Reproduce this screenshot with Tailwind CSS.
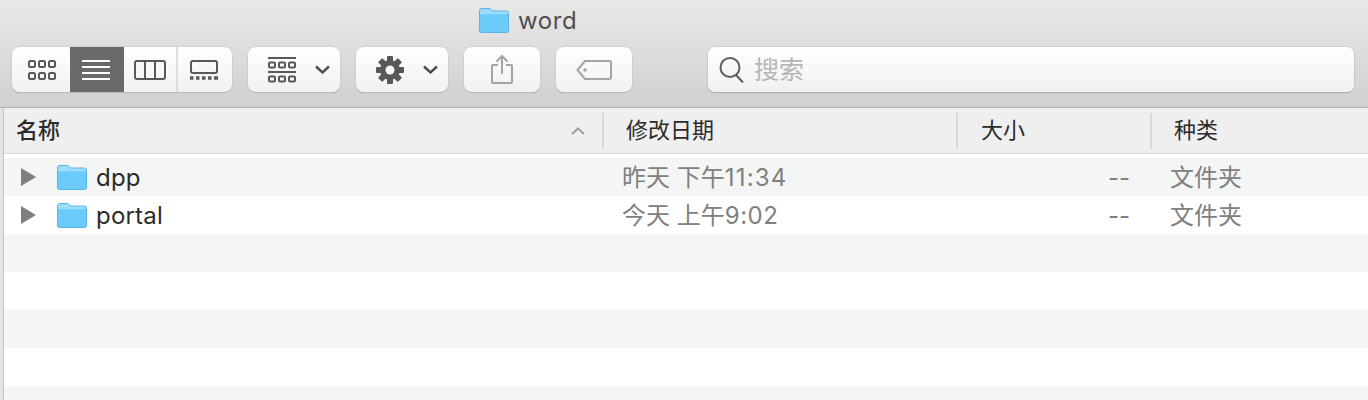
<!DOCTYPE html>
<html lang="zh-CN">
  <head>
    <meta charset="UTF-8" />
    <meta name="viewport" content="width=device-width, initial-scale=1.0" />
    <script src="https://cdn.jsdelivr.net/npm/@tailwindcss/browser@4"></script>
    <title>word</title>
  </head>
  <body class="bg-white h-[400px] overflow-hidden font-['Inter','Noto_Sans_CJK_SC',sans-serif]">
    <svg class="hidden">
      <symbol id="folder" viewBox="0 0 30 25">
        <path d="M0.5 3Q0.5 0.5 3 0.5H10Q11.5 0.5 12.5 2L13.5 3H27.5Q29.5 3 29.5 5V22.5Q29.5 24.5 27.5 24.5H2.5Q0.5 24.5 0.5 22.5Z" fill="#62c5fa" stroke="#58b4e6" stroke-width="1" />
        <path d="M1 3Q1 1 3 1H10Q11 1 12 2.5L13 3.5H28Q29 3.5 29 5V6.5H1Z" fill="#9ddcfc" />
        <path d="M1 6.5H29V22.5Q29 23.5 28 23.5H2Q1 23.5 1 22.5Z" fill="#6ccbfb" />
      </symbol>
      <symbol id="chevron" viewBox="0 0 15 9">
        <path d="M1 1.5L7.5 7.5L14 1.5" fill="none" stroke="#4d4d4d" stroke-width="2.4" />
      </symbol>
    </svg>

    <!-- Toolbar -->
    <div class="h-[108px] border-b border-[#b1b1b1] bg-gradient-to-b from-[#e9e9e9] to-[#d0d0d0]">
      <div class="h-[47px] pl-[479px] flex items-start pt-[8px]">
        <svg class="w-[30px] h-[25px]"><use href="#folder" /></svg>
        <span class="ml-[9px] text-[24px] leading-[26px] tracking-[0.6px] text-[#4f4f4f]">word</span>
      </div>
      <div class="flex pl-[12px] h-[45px] text-[#555]">
        <!-- View switcher -->
        <div class="w-[220px] h-full flex rounded-[8px] bg-gradient-to-b from-white to-[#f1f1f1] shadow-[0_0_0_0.5px_#c6c6c6,0_1px_1px_#a8a8a8] overflow-hidden">
          <div class="w-[58px] flex items-center justify-center">
            <svg width="30" height="22" viewBox="0 0 30 22" fill="none" stroke="#585858" stroke-width="2" class="ml-[1px]">
              <rect x="2" y="2" width="6" height="6" rx="1.5" /><rect x="12" y="2" width="6" height="6" rx="1.5" /><rect x="22" y="2" width="6" height="6" rx="1.5" />
              <rect x="2" y="14" width="6" height="6" rx="1.5" /><rect x="12" y="14" width="6" height="6" rx="1.5" /><rect x="22" y="14" width="6" height="6" rx="1.5" />
            </svg>
          </div>
          <div class="w-[54px] flex items-center justify-center bg-[#6a6a6a]">
            <svg width="28" height="20" viewBox="0 0 28 20" fill="#fff" class="-ml-[2px]">
              <rect y="0" width="28" height="2" /><rect y="6" width="28" height="2" /><rect y="12" width="28" height="2" /><rect y="18" width="28" height="2" />
            </svg>
          </div>
          <div class="w-[54px] flex items-center justify-center border-r-2 border-[#dedede]">
            <svg width="32" height="20" viewBox="0 0 32 20" fill="none" stroke="#585858" stroke-width="2">
              <rect x="1" y="1" width="30" height="18" rx="2" /><path d="M11 1V19M21 1V19" />
            </svg>
          </div>
          <div class="flex-1 flex items-center justify-center">
            <svg width="28" height="20" viewBox="0 0 28 20" fill="none" stroke="#585858" stroke-width="2" class="-ml-[3px]">
              <rect x="1" y="1" width="26" height="12" rx="2" />
              <path d="M0 18H3.5M6 18H9.5M12 18H15.5M18 18H21.5M24 18H28" stroke-width="3.5" />
            </svg>
          </div>
        </div>

        <!-- Group by -->
        <div class="ml-[16px] w-[92px] flex items-center rounded-[8px] bg-gradient-to-b from-white to-[#f1f1f1] shadow-[0_0_0_0.5px_#c6c6c6,0_1px_1px_#a8a8a8]">
          <svg width="28" height="26" viewBox="0 0 28 26" fill="none" stroke="#585858" stroke-width="2" class="ml-[20px]">
            <path d="M0 1H28M0 15H28" />
            <rect x="1" y="5.5" width="6" height="5" rx="1" /><rect x="11" y="5.5" width="6" height="5" rx="1" /><rect x="21" y="5.5" width="6" height="5" rx="1" />
            <rect x="1" y="19.5" width="6" height="5" rx="1" /><rect x="11" y="19.5" width="6" height="5" rx="1" /><rect x="21" y="19.5" width="6" height="5" rx="1" />
          </svg>
          <svg class="ml-[19px] w-[15px] h-[9px]"><use href="#chevron" /></svg>
        </div>

        <!-- Action -->
        <div class="ml-[16px] w-[92px] flex items-center rounded-[8px] bg-gradient-to-b from-white to-[#f1f1f1] shadow-[0_0_0_0.5px_#c6c6c6,0_1px_1px_#a8a8a8]">
          <svg width="28" height="28" viewBox="0 0 28 28" class="ml-[20px]">
            <g fill="#585858">
              <rect x="11" y="0" width="6" height="28" rx="1" />
              <rect x="11" y="0" width="6" height="28" rx="1" transform="rotate(45 14 14)" />
              <rect x="11" y="0" width="6" height="28" rx="1" transform="rotate(90 14 14)" />
              <rect x="11" y="0" width="6" height="28" rx="1" transform="rotate(135 14 14)" />
              <circle cx="14" cy="14" r="10" />
            </g>
            <circle cx="14" cy="14" r="4.5" fill="#f8f8f8" />
          </svg>
          <svg class="ml-[19px] w-[15px] h-[9px]"><use href="#chevron" /></svg>
        </div>

        <!-- Share -->
        <div class="ml-[16px] w-[76px] flex items-center justify-center rounded-[8px] bg-gradient-to-b from-white to-[#f1f1f1] shadow-[0_0_0_0.5px_#c6c6c6,0_1px_1px_#a8a8a8]">
          <svg width="22" height="29" viewBox="0 0 22 29" fill="none" stroke="#a4a4a4" stroke-width="2" class="-ml-[1px]">
            <path d="M7 10H2Q1 10 1 11V27Q1 28 2 28H20Q21 28 21 27V11Q21 10 20 10H15" />
            <path d="M11 19V1.5M5.5 6.5L11 1L16.5 6.5" />
          </svg>
        </div>

        <!-- Tag -->
        <div class="ml-[16px] w-[76px] flex items-center justify-center rounded-[8px] bg-gradient-to-b from-white to-[#f1f1f1] shadow-[0_0_0_0.5px_#c6c6c6,0_1px_1px_#a8a8a8]">
          <svg width="36" height="20" viewBox="0 0 36 20" fill="none" stroke="#a4a4a4" stroke-width="2">
            <path d="M9 1H33Q35 1 35 3V17Q35 19 33 19H9L1.5 10Z" stroke-linejoin="round" />
            <circle cx="9" cy="10" r="1.8" fill="#a4a4a4" stroke="none" />
          </svg>
        </div>

        <!-- Search -->
        <div class="ml-[76px] w-[646px] flex items-center rounded-[7px] bg-gradient-to-b from-white to-[#f1f1f1] shadow-[0_0_0_0.5px_#c0c0c0,0_1px_1px_#9a9a9a]">
          <svg width="26" height="26" viewBox="0 0 26 26" fill="none" stroke="#5e5e5e" stroke-width="2" class="ml-[11px]">
            <circle cx="11" cy="10.5" r="9.5" /><path d="M17 18L24 25.5" />
          </svg>
          <span class="ml-[9px] mt-[3px] text-[25px] text-[#b5b5b5]">搜索</span>
        </div>
      </div>
    </div>

    <div class="border-l-[3px] border-[#e4e4e4] h-[292px] overflow-hidden">
      <div class="border-l border-[#c4c4c4] h-full">
        <!-- Column headers -->
        <div class="h-[46px] grid grid-cols-[600px_354px_194px_1fr] items-center bg-[#efefef] text-[22px] text-[#2b2b2b] border-b border-[#d6d6d6]">
          <div class="h-[36px] flex items-center pl-[12px] pr-[17px] justify-between border-r-2 border-[#d8d8d8]">
            <span class="font-medium">名称</span>
            <svg width="14" height="8" viewBox="0 0 14 8" fill="none" stroke="#a2a2a2" stroke-width="2.2"><path d="M1 7L7 1.5L13 7" /></svg>
          </div>
          <div class="h-[36px] flex items-center pl-[22px] border-r-2 border-[#d8d8d8]">修改日期</div>
          <div class="h-[36px] flex items-center pl-[23px] border-r-2 border-[#d8d8d8]">大小</div>
          <div class="h-[36px] flex items-center pl-[22px]">种类</div>
        </div>

        <!-- Rows -->
        <div class="pt-[4px] text-[24px] text-[#808080]">
          <div class="h-[38px] grid grid-cols-[600px_354px_194px_1fr] items-center bg-[#f4f5f5]">
            <div class="flex items-center pl-[17px]">
              <span class="w-0 h-0 border-y-[9px] border-y-transparent border-l-[15px] border-l-[#7f7f7f]"></span>
              <svg class="ml-[21px] w-[30px] h-[25px]"><use href="#folder" /></svg>
              <span class="ml-[9px] mt-[1px] tracking-[0.2px] text-[#2b2b2b]">dpp</span>
            </div>
            <div class="pl-[18px] mt-[1px]">昨天 下午<span class="tracking-[1.2px]">11:34</span></div>
            <div class="text-right pr-[22px] mt-[1px]">--</div>
            <div class="pl-[18px] mt-[1px]">文件夹</div>
          </div>
          <div class="h-[38px] grid grid-cols-[600px_354px_194px_1fr] items-center bg-white">
            <div class="flex items-center pl-[17px]">
              <span class="w-0 h-0 border-y-[9px] border-y-transparent border-l-[15px] border-l-[#7f7f7f]"></span>
              <svg class="ml-[21px] w-[30px] h-[25px]"><use href="#folder" /></svg>
              <span class="ml-[9px] mt-[1px] tracking-[0.2px] text-[#2b2b2b]">portal</span>
            </div>
            <div class="pl-[18px] mt-[1px]">今天 上午<span class="tracking-[0.5px]">9:02</span></div>
            <div class="text-right pr-[22px] mt-[1px]">--</div>
            <div class="pl-[18px] mt-[1px]">文件夹</div>
          </div>
          <div class="h-[38px] bg-[#f4f5f5]"></div>
          <div class="h-[38px] bg-white"></div>
          <div class="h-[38px] bg-[#f4f5f5]"></div>
          <div class="h-[38px] bg-white"></div>
          <div class="h-[38px] bg-[#f4f5f5]"></div>
        </div>
      </div>
    </div>
  </body>
</html>
